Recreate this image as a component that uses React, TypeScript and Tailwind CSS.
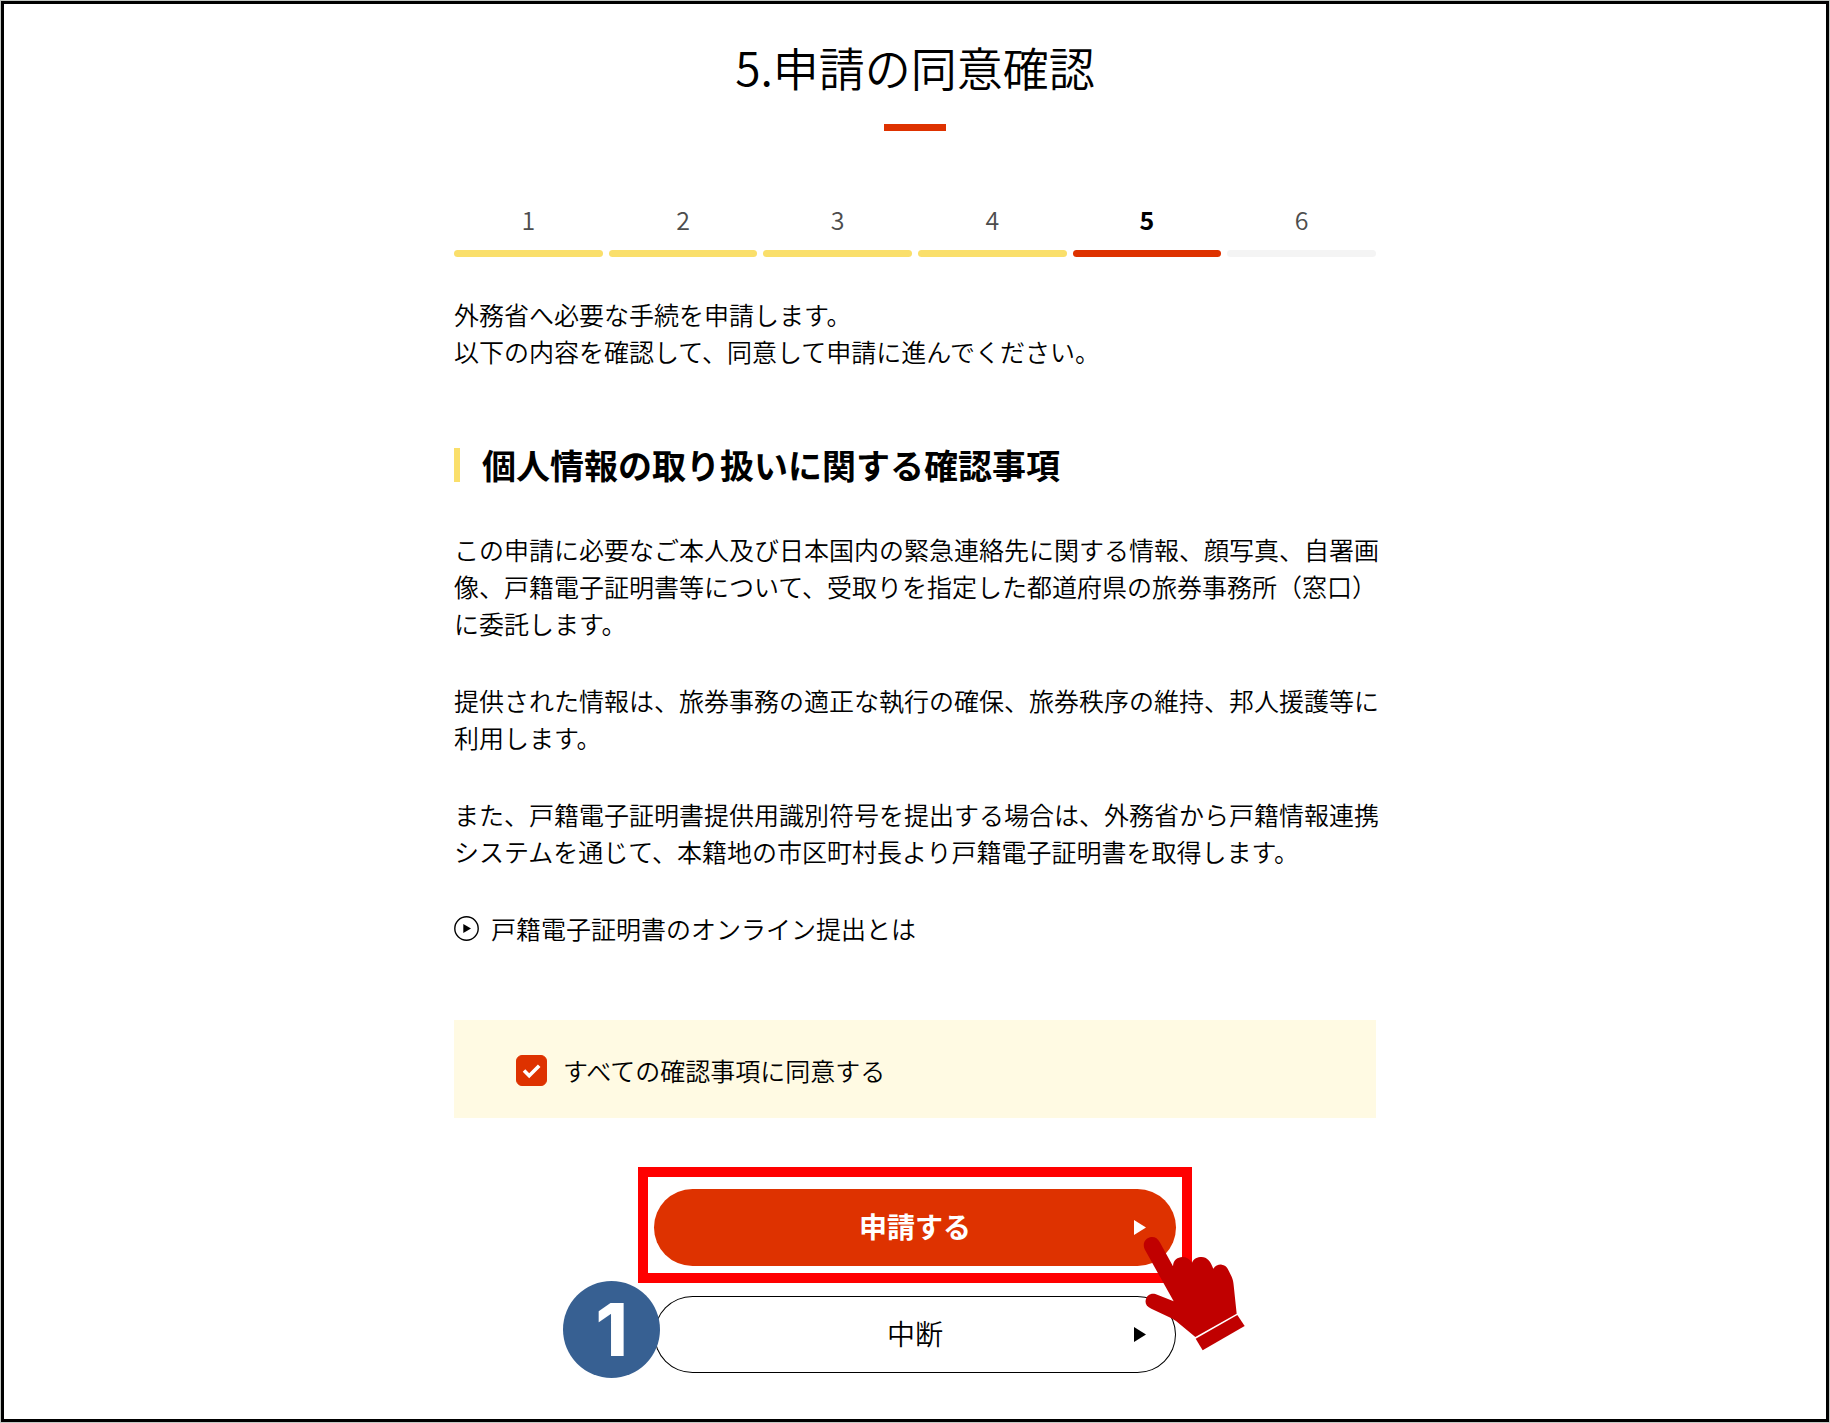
import { useState } from "react";

const steps = [
  { no: 1, bar: "bg-[#fadf6b]", label: "text-[#4d4d4d]" },
  { no: 2, bar: "bg-[#fadf6b]", label: "text-[#4d4d4d]" },
  { no: 3, bar: "bg-[#fadf6b]", label: "text-[#4d4d4d]" },
  { no: 4, bar: "bg-[#fadf6b]", label: "text-[#4d4d4d]" },
  { no: 5, bar: "bg-[#de3200]", label: "font-bold text-black" },
  { no: 6, bar: "bg-[#f4f4f4]", label: "text-[#4d4d4d]" },
];

function StepBar() {
  return (
    <ol className="mt-[70px] grid w-full grid-cols-6 gap-[6px]">
      {steps.map((step) => (
        <li
          key={step.no}
          aria-current={step.no === 5 ? "step" : undefined}
          className="flex flex-col gap-[13px] text-center"
        >
          <span className={`text-[25px] leading-9 ${step.label}`}>
            {step.no}
          </span>
          <span className={`h-[7px] rounded-full ${step.bar}`} />
        </li>
      ))}
    </ol>
  );
}

function Triangle() {
  return (
    <svg
      viewBox="0 0 12 15"
      className="absolute top-[31px] right-[30px] h-[15px] w-3"
      fill="currentColor"
      aria-hidden="true"
    >
      <path d="M0 0 12 7.5 0 15Z" />
    </svg>
  );
}

function PointingHand() {
  return (
    <svg
      viewBox="0 0 306 345"
      className="pointer-events-none absolute top-[48px] left-[489px] w-[102px]"
      aria-hidden="true"
    >
      <g fill="#c00000">
        <path d="M5 37C-3 18 8 4 21 1C34-2 44 4 50 15L90 88C91 68 104 61 118 60C131 60 140 66 147 77C152 65 163 60 176 60C192 60 202 72 211 95C217 86 227 82 236 83C245 84 250 88 254 95L266 119C270 129 271 134 272 145L281 230L157 300L99 252L84 243L25 215C12 209 6 201 8 190C11 175 22 168 37 171L92 193Z" />
        <path d="M158 305 283 234 305 267 179 340Z" />
      </g>
    </svg>
  );
}

export default function App() {
  const [agreed, setAgreed] = useState(true);

  return (
    <div className="flex min-h-screen flex-col border border-[#c4c8c4] bg-white font-['Noto_Sans_CJK_JP',sans-serif] text-black">
      <main className="flex flex-1 flex-col items-center border-3 border-black px-4 pt-[30px] pb-[44px] font-[350]">
        <h1 className="text-[46px] leading-[64px] font-[350]">
          5.申請の同意確認
        </h1>
        <div className="mt-[26px] h-[7px] w-[62px] bg-[#de3200]" />

        <div className="flex w-full max-w-[922px] flex-col items-start">
          <StepBar />

          <p className="mt-[39px] text-[25px] leading-[37px] whitespace-nowrap">
            外務省へ必要な手続を申請します。
            <br />
            以下の内容を確認して、同意して申請に進んでください。
          </p>

          <h2 className="mt-[78px] border-l-6 border-[#fadf6b] pl-[22px] text-[34px] leading-[34px] font-bold">
            個人情報の取り扱いに関する確認事項
          </h2>

          <div className="mt-[49px] flex flex-col items-start gap-[40px] text-[25px] leading-[37px] whitespace-nowrap">
            <p>
              この申請に必要なご本人及び日本国内の緊急連絡先に関する情報、顔写真、自署画
              <br />
              像、戸籍電子証明書等について、受取りを指定した都道府県の旅券事務所（窓口）
              <br />
              に委託します。
            </p>
            <p>
              提供された情報は、旅券事務の適正な執行の確保、旅券秩序の維持、邦人援護等に
              <br />
              利用します。
            </p>
            <p>
              また、戸籍電子証明書提供用識別符号を提出する場合は、外務省から戸籍情報連携
              <br />
              システムを通じて、本籍地の市区町村長より戸籍電子証明書を取得します。
            </p>
            <a href="#koseki" className="flex items-center gap-3">
              <svg viewBox="0 0 25 25" className="size-[25px]" aria-hidden="true">
                <circle
                  cx="12.5"
                  cy="12.5"
                  r="11.7"
                  fill="none"
                  stroke="currentColor"
                  strokeWidth="1.4"
                />
                <path d="M9.3 8 17 12.5 9.3 17Z" fill="currentColor" />
              </svg>
              戸籍電子証明書のオンライン提出とは
            </a>
          </div>

          <div className="mt-[73px] flex h-[98px] w-full items-center bg-[#fffae3] px-[62px] pt-[2px]">
            <label className="flex items-center gap-4 text-[25px] leading-[37px]">
              <span className="relative grid size-[31px]">
                <input
                  type="checkbox"
                  checked={agreed}
                  onChange={(e) => setAgreed(e.target.checked)}
                  className="size-[31px] appearance-none rounded-[6px] border border-[#de3200] bg-white checked:bg-[#de3200]"
                />
                <svg
                  viewBox="0 0 31 31"
                  className="pointer-events-none absolute inset-0"
                  fill="none"
                  stroke="white"
                  strokeWidth="3.6"
                  aria-hidden="true"
                >
                  <path d="M8 15.5 13.2 20.7 23.2 10.7" />
                </svg>
              </span>
              すべての確認事項に同意する
            </label>
          </div>
        </div>

        <div className="relative mt-[71px] flex w-full max-w-[522px] flex-col gap-[30px] text-[28px]">
          <button
            type="button"
            className="relative flex h-[77px] items-center justify-center rounded-full bg-[#de3200] pb-1 font-bold text-white"
          >
            申請する
            <Triangle />
          </button>
          <button
            type="button"
            className="relative flex h-[77px] items-center justify-center rounded-full bg-white pb-1 inset-ring inset-ring-black"
          >
            中断
            <Triangle />
          </button>

          {/* guide marks laid over the buttons */}
          <div className="pointer-events-none absolute -inset-x-4 -top-[22px] h-[116px] border-10 border-[#ff0000]" />
          <div className="absolute top-[92px] -left-[91px] flex size-[97px] items-center justify-center rounded-full bg-[#376092] font-['Inter',sans-serif] text-[73px] leading-none font-extrabold text-white">
            1
          </div>
          <PointingHand />
        </div>
      </main>
    </div>
  );
}
